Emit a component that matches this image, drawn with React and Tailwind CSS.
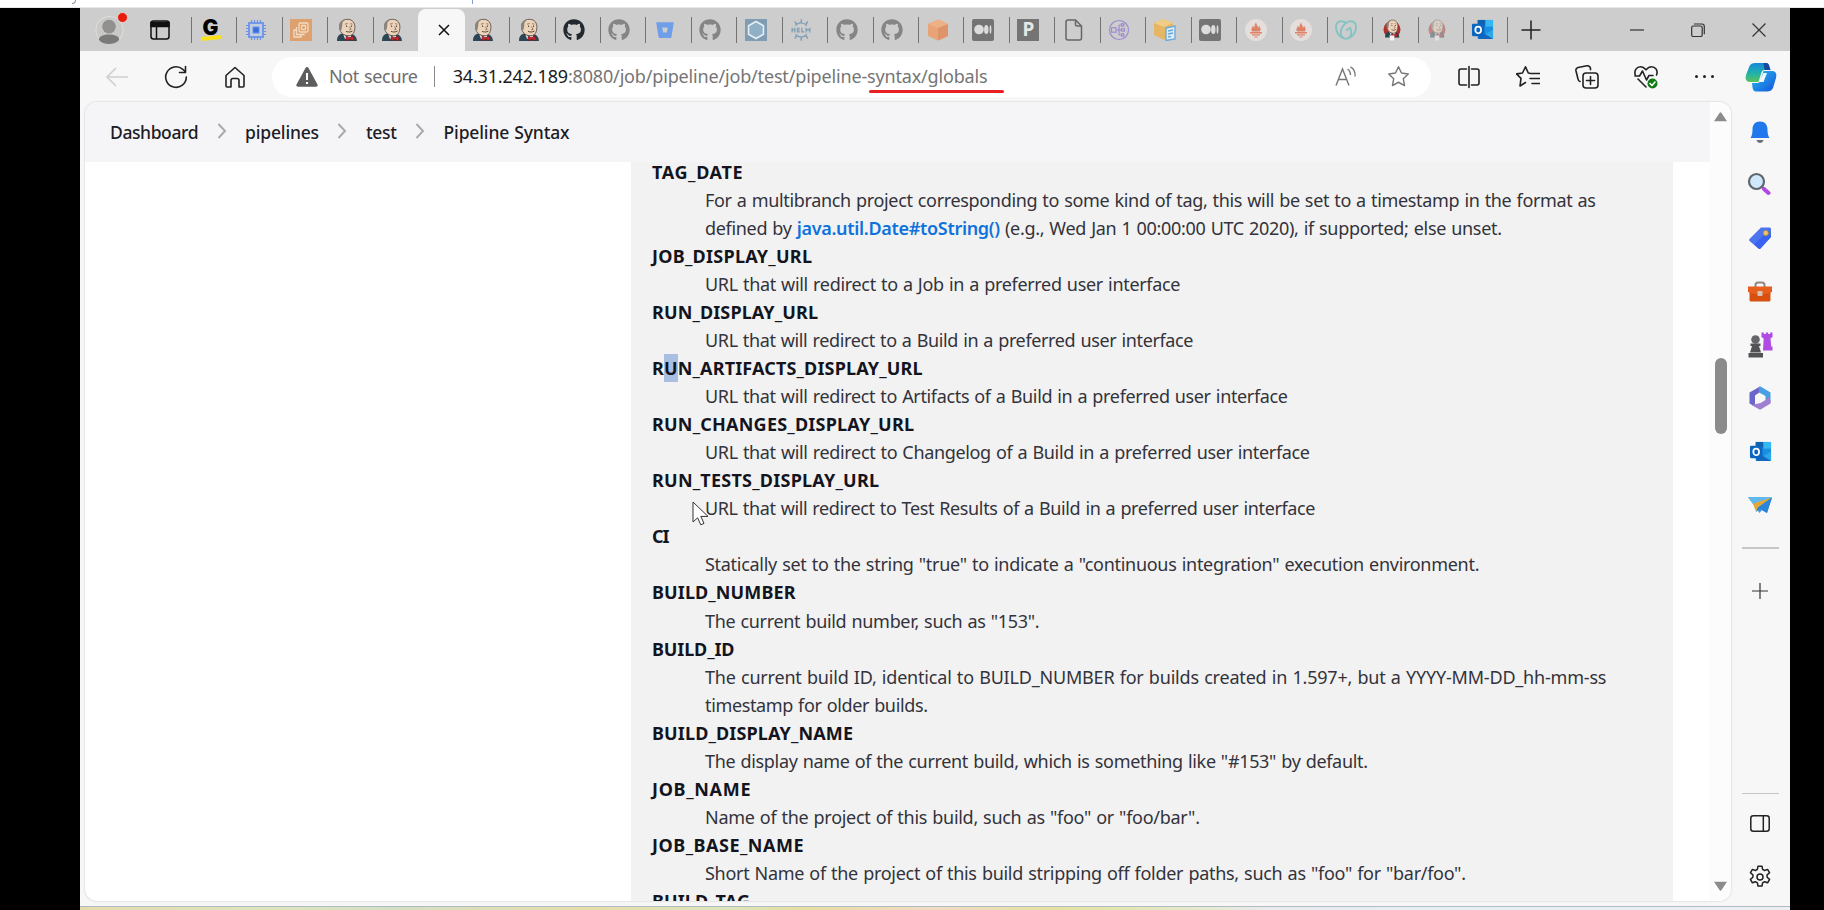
import { useLayoutEffect, useRef } from "react";
import { FaGithub, FaBitbucket } from "react-icons/fa";
import { SiHelm, SiPrometheus, SiGodaddy } from "react-icons/si";

/* Single line of text whose tracking is adjusted to fill a given width. */
function Fit({ w, className = "", children }) {
  const ref = useRef(null);
  useLayoutEffect(() => {
    const el = ref.current;
    el.style.letterSpacing = "0px";
    const natural = el.getBoundingClientRect().width;
    el.style.letterSpacing = (w - natural) / Math.max(1, el.textContent.length - 1) + "px";
  }, [w]);
  return (
    <span ref={ref} className={"inline-block whitespace-pre [word-spacing:0.8px] " + className}>
      {children}
    </span>
  );
}

function JenkinsFigure() {
  return (
    <g>
      <path d="M1 23c0-4.500 1.500-6.500 5-7.500l9 .5c4 .7 5.500 3 6 7z" fill="#2d4656" />
      <path d="M7 15.500l4 3.500 4-3v3l-6 2z" fill="#e8e4df" />
      <path d="M3.800 11C2.800 5 6 1.300 11.500 1.300c5 0 8 3.700 7.300 9.200-.4 4.500-2.300 7-5.800 7.300-5 .2-8.500-2.800-9.200-6.800z" fill="#ecd3b9" stroke="#4d403a" strokeWidth=".8" />
      <path d="M3.600 12C1.800 7 3.800 2.300 9 1.500 7 3.500 6 5 6.300 7.500l-.8 4.300z" fill="#8b857f" />
      <path d="M9 6.200l2.600-.7M14.200 5.700l2.300.5M13.400 8.500l1.700 2.800-1.900.6" fill="none" stroke="#7a6255" strokeWidth=".8" />
      <path d="M10 13.300c2 1 4.500 1 6.500-.3" fill="none" stroke="#5a463e" strokeWidth="1" />
      <circle cx="10.600" cy="8.200" r=".65" fill="#2b2220" />
      <circle cx="15.500" cy="8.200" r=".65" fill="#2b2220" />
      <path d="M10 18.500l3.500 1.300 4-1.800.5 4.800-4.300-1.500-3.500 1.500z" fill="#c9252b" stroke="#6f1518" strokeWidth=".5" />
    </g>
  );
}

function Jenkins() {
  return (
    <svg viewBox="0 0 22 24" className="h-6 w-[22px]">
      <JenkinsFigure />
    </svg>
  );
}

function JenkinsRound() {
  return (
    <svg viewBox="0 0 22 24" className="h-6 w-[22px]">
      <circle cx="11" cy="11.500" r="8.500" fill="#b5302c" />
      <g transform="translate(3.300 1) scale(.72 .8)"><JenkinsFigure /></g>
      <path d="M8.500 17.500h5l-.5 5h-4z" fill="#f5f5f5" />
    </svg>
  );
}

function Outlook() {
  return (
    <svg viewBox="0 0 24 24" className="size-[23px]">
      <rect x="7" y="2" width="16" height="20" rx="1" fill="#1a8fe0" />
      <rect x="7" y="2" width="8" height="6" fill="#0f62b0" />
      <rect x="15" y="2" width="8" height="7" fill="#35b8f1" />
      <path d="M7 22l16-10v9a1 1 0 01-1 1z" fill="#2aa8ea" />
      <path d="M7 12l16 10H8z" fill="#1266bd" />
      <rect x="1" y="6" width="13" height="13" rx="1.200" fill="#0b66c0" />
      <ellipse cx="7.500" cy="12.500" rx="3" ry="3.400" fill="none" stroke="#fff" strokeWidth="1.800" />
    </svg>
  );
}

function Medium() {
  return (
    <svg viewBox="0 0 22 22" className="size-[22px]">
      <rect width="22" height="22" rx="2" fill="#747474" />
      <circle cx="7" cy="10.500" r="4.800" fill="#dcdcdc" />
      <ellipse cx="14.300" cy="10.500" rx="2.200" ry="4.600" fill="#dcdcdc" />
      <ellipse cx="18.500" cy="10.500" rx=".9" ry="4.200" fill="#dcdcdc" />
    </svg>
  );
}

function Prom() {
  return (
    <span className="flex size-[22px] items-center justify-center rounded-full bg-[#e4dfdd]">
      <svg viewBox="0 0 16 16" className="size-4" fill="#dd8468">
        <path d="M4 9.500C2.500 7 4.500 6 4.800 3.500 5.500 4.500 6 5 6 6c1-2 .5-4 2-5.500C8.500 2.500 10 4 10 6c.5-.8 1-1.500 1-2.500 1 2 2.500 3.500 1 6zM2 10h12v1.500H2zM4 12.300h8v1.300H4zM6 14.400h4c-.5 1.600-3.500 1.600-4 0z" />
      </svg>
    </span>
  );
}

const Hub = () => <FaGithub className="size-[22px] text-[#858585]" />;

const tabs = [
  <span className="flex h-[22px] w-5 flex-col items-center">
    <span className="font-['Inter',sans-serif] text-[21px] leading-[17px] font-black text-black">G</span>
    <span className="h-1 w-5 -rotate-6 bg-[#fbe11c]" />
  </span>,
  <svg viewBox="0 0 22 22" className="size-[22px]" fill="none" stroke="#6a93e8">
    <path d="M6.500 1v20M9.500 1v20M12.500 1v20M15.500 1v20M1 6.500h20M1 9.500h20M1 12.500h20M1 15.500h20" strokeWidth="1.200" />
    <rect x="4" y="4" width="14" height="14" fill="#c3cde2" strokeWidth="1.800" />
    <rect x="8" y="8" width="6" height="6" fill="#3b6fdc" />
  </svg>,
  <svg viewBox="0 0 22 22" className="size-[22px]" fill="none" stroke="#f2dcc5" strokeWidth="1.300">
    <rect width="22" height="22" fill="#dea06c" stroke="none" />
    <rect x="9" y="4" width="9" height="9" rx="1.500" />
    <rect x="11.500" y="6.500" width="4" height="4" rx=".5" />
    <path d="M6.500 8v7.500h7.500V14.500M6.500 11H4v7h7v-2.500" />
  </svg>,
  <Jenkins />,
  <Jenkins />,
  "active",
  <Jenkins />,
  <Jenkins />,
  <FaGithub className="size-[22px] text-[#24292f]" />,
  <Hub />,
  <FaBitbucket className="size-[18px] text-[#6f9fe8]" />,
  <Hub />,
  <svg viewBox="0 0 22 22" className="size-[22px]">
    <rect width="22" height="22" fill="#7f9cb2" />
    <path d="M11 2.500l7.500 4.200v8.600L11 19.500l-7.500-4.200V6.700z" fill="#8fb0c6" stroke="#e6eef3" strokeWidth="1.600" />
  </svg>,
  <SiHelm className="size-[22px] text-[#7d9fb4]" />,
  <Hub />,
  <Hub />,
  <svg viewBox="0 0 22 22" className="size-[22px]">
    <path d="M11 .5l10 4.500v12L11 21.500 1 17V5z" fill="#e8a477" />
    <path d="M11 9l10-4v12l-10 4.500z" fill="#dd9468" />
    <path d="M1 5l10 4 10-4L11 .5z" fill="#eeb085" />
  </svg>,
  <Medium />,
  <span className="flex size-[22px] items-center justify-center bg-[#747474] font-['Noto_Sans',sans-serif] text-[19px] leading-none font-bold text-[#e6e6e6]">P</span>,
  <svg viewBox="0 0 18 22" className="h-[22px] w-[18px]" fill="none" stroke="#666" strokeWidth="1.500">
    <path d="M3 1h7.500L16.500 7v12a2 2 0 01-2 2H3a2 2 0 01-2-2V3a2 2 0 012-2zM10.500 1v4.500a1.500 1.500 0 001.500 1.500h4.500" />
  </svg>,
  <svg viewBox="0 0 22 22" className="size-[22px]" fill="none" stroke="#9d8cce" strokeWidth="1.200">
    <circle cx="11" cy="11" r="9.500" />
    <rect x="3.500" y="8.700" width="4.500" height="4.500" />
    <path d="M8 11h5.500M11 6v10M11 6h2.500M11 16h2.500" />
    <rect x="13.500" y="4.800" width="2.300" height="2.300" /><rect x="13.500" y="9.800" width="3" height="2.300" /><rect x="13.500" y="14.800" width="2.300" height="2.300" />
  </svg>,
  <svg viewBox="0 0 22 22" className="size-[22px]">
    <path d="M0 4l9-4 10 4v12l-9 5-10-5z" fill="#e5b765" />
    <path d="M0 4l9-4 10 4-9 4z" fill="#f0cd86" />
    <path d="M12 9l9-2v13l-9 1.500z" fill="#dcecf5" stroke="#6ba7d6" strokeWidth="1.300" />
    <path d="M14 12l5-1M14 15l5-1M14 18l3-.5" stroke="#6ba7d6" strokeWidth="1.300" />
  </svg>,
  <Medium />,
  <Prom />,
  <Prom />,
  <SiGodaddy className="size-[22px] text-[#87c3c5]" />,
  <JenkinsRound />,
  <span className="opacity-45"><JenkinsRound /></span>,
  <Outlook />,
];

const vars = [
  ["TAG_DATE", 90.5, [
    ["For a multibranch project corresponding to some kind of tag, this will be set to a timestamp in the format as", 891],
    ["java", 797],
  ]],
  ["JOB_DISPLAY_URL", 160, [["URL that will redirect to a Job in a preferred user interface", 475.5]]],
  ["RUN_DISPLAY_URL", 166, [["URL that will redirect to a Build in a preferred user interface", 488.5]]],
  ["RUN_ARTIFACTS_DISPLAY_URL", 270.5, [["URL that will redirect to Artifacts of a Build in a preferred user interface", 583]]],
  ["RUN_CHANGES_DISPLAY_URL", 262, [["URL that will redirect to Changelog of a Build in a preferred user interface", 605]]],
  ["RUN_TESTS_DISPLAY_URL", 227, [["URL that will redirect to Test Results of a Build in a preferred user interface", 610.5]]],
  ["CI", 17.5, [['Statically set to the string "true" to indicate a "continuous integration" execution environment.', 774.5]]],
  ["BUILD_NUMBER", 143.5, [['The current build number, such as "153".', 334.5]]],
  ["BUILD_ID", 82.5, [
    ["The current build ID, identical to BUILD_NUMBER for builds created in 1.597+, but a YYYY-MM-DD_hh-mm-ss", 901.5],
    ["timestamp for older builds.", 223],
  ]],
  ["BUILD_DISPLAY_NAME", 201, [['The display name of the current build, which is something like "#153" by default.', 663]]],
  ["JOB_NAME", 98.5, [['Name of the project of this build, such as "foo" or "foo/bar".', 495]]],
  ["JOB_BASE_NAME", 151.5, [['Short Name of the project of this build stripping off folder paths, such as "foo" for "bar/foo".', 761]]],
  ["BUILD_TAG", 98, []],
];

function Line({ text, w }) {
  if (text === "java")
    return (
      <Fit w={w}>
        defined by <a className="font-semibold text-[#0f72dc]">java.util.Date#toString()</a> (e.g., Wed Jan 1 00:00:00 UTC 2020), if supported; else unset.
      </Fit>
    );
  return <Fit w={w}>{text}</Fit>;
}

function Crumb({ w, children }) {
  return <Fit w={w} className="text-[17.500px] font-medium text-[#1c1c26]">{children}</Fit>;
}
const Sep = () => (
  <svg viewBox="0 0 10 16" className="mx-[18.500px] h-4 w-[10px] -translate-y-px" fill="none" stroke="#a9a9b0" strokeWidth="2">
    <path d="M1.500 1l6.500 7-6.500 7" />
  </svg>
);

const Tool = ({ className, children }) => (
  <span className={"flex shrink-0 items-center justify-center " + className}>
    <svg viewBox="0 0 24 24" className="size-6" fill="none" stroke="#222" strokeWidth="1.600" strokeLinecap="round" strokeLinejoin="round">{children}</svg>
  </span>
);

const sideIcons = [
  <svg viewBox="0 0 24 24" className="size-6">
    <path d="M12 1.500c-5 0-7.500 3.500-7.500 8 0 4-.5 6-2 8.500h19c-1.500-2.500-2-4.500-2-8.500 0-4.500-2.500-8-7.500-8z" fill="#2078ec" />
    <path d="M8.500 20h7c-.5 2-2 3-3.500 3s-3-1-3.500-3z" fill="#6b6e76" />
  </svg>,
  <svg viewBox="0 0 24 24" className="size-6 -translate-x-px -translate-y-px">
    <path d="M14.500 14.500l3 2.500" stroke="#6d6f75" strokeWidth="2.500" />
    <path d="M17 17l4.500 4" stroke="#b24ae0" strokeWidth="4" strokeLinecap="round" />
    <circle cx="9.500" cy="9.500" r="7.500" fill="#cfe8fb" stroke="#5e666d" strokeWidth="2.200" />
  </svg>,
  <svg viewBox="0 0 24 24" className="size-6">
    <path d="M13 1.500h8.500a1.500 1.500 0 011.500 1.500v8L12.500 22.500a1.500 1.500 0 01-2 0L1.500 15a1.500 1.500 0 010-2z" fill="#4c74ee" />
    <path d="M23 11L12.500 22.500a1.500 1.500 0 01-2 0L6 18.500 21 4z" fill="#3a62f0" />
    <circle cx="17.800" cy="7" r="2.600" fill="#e9c469" stroke="#b78c3a" strokeWidth=".8" />
  </svg>,
  <svg viewBox="0 0 26 24" className="h-6 w-[26px]">
    <path d="M8.500 7V5a2.500 2.500 0 012.500-2.500h4A2.500 2.500 0 0117.500 5v2" fill="none" stroke="#8f8782" strokeWidth="2" />
    <rect x="2.500" y="8" width="21" height="13.500" rx="1.500" fill="#d8500f" />
    <path d="M1 6.500h24v5.500c-8 3-16 3-24 0z" fill="#e65f1c" />
    <rect x="10.500" y="11" width="5" height="5" rx="1" fill="#d9c3b5" />
  </svg>,
  <svg viewBox="0 0 26 26" className="size-[26px]">
    <circle cx="8.500" cy="7.500" r="4.300" fill="#66666a" />
    <path d="M3.500 11.500h10v2.500h-1.500l2 6.500h-11l2-6.500H3.500zM1.500 21h14.500v4.500H1.500z" fill="#535357" />
    <path d="M14.500 .5h2.300v1.500h2V.5h2.400v1.500h2V.5h2.300v4.500l-2 1.500.7 8h1.300v4H16l.7-12-2.200-1.500z" fill="#b04be4" />
  </svg>,
  <svg viewBox="0 0 24 24" className="size-6">
    <path d="M12 .5L1.500 6.500v11l5.500 3V9.500l7-5z" fill="#6a66c9" />
    <path d="M11 .800a2 2 0 012 0L22.500 6.500v10.500l-5-3V10L11 6.500z" fill="#4a9fe3" />
    <path d="M22.500 14.500v3l-9.500 5.700a2 2 0 01-2 0L3.500 19l9-2 5-3 3-3z" fill="#a07fd0" />
    <path d="M12 7.500l4 2.300v4.400L12 16.500l-4-2.300V9.800z" fill="#f7f7f7" />
  </svg>,
  <Outlook />,
  <svg viewBox="0 0 24 24" className="size-6">
    <path d="M0 4l24 .5L19 20l-5-3-2.500 3-5-7z" fill="#379be4" />
    <path d="M0 4l24 .5L6.500 13z" fill="#60b8ee" />
    <path d="M24 4.500L5 10.500 8 19l2-4.500z" fill="#e2a73a" />
    <path d="M24 4.500L10 14.500 8 19l4-3 7 4z" fill="#2a84d9" />
  </svg>,
];

export default function App() {
  return (
    <div className="flex h-[910px] w-[1824px] flex-col overflow-hidden bg-black font-['Noto_Sans',sans-serif]">
      <div className="flex h-2 shrink-0 items-start overflow-hidden border-b border-[#e8e8e8] bg-white pl-[72px]">
        <span className="h-1 w-1 rounded-br-full border-r border-b border-[#8794a8]" />
        <span className="ml-[396px] h-1 w-px bg-[#7f9fce]" />
      </div>
      <div className="ml-20 flex h-[902px] w-[1710px] flex-col bg-[#f7f7f7]">
        {/* Tab strip */}
        <div className="flex h-[43px] shrink-0 items-center bg-[#cdcdcd]">
          <span className="relative ml-[15px] flex size-[29px] shrink-0 items-center justify-center overflow-visible">
            <svg viewBox="0 0 30 30" className="size-[30px]">
              <circle cx="15" cy="15" r="14" fill="#c9c9c7" stroke="#dcdcdc" strokeWidth="1.200" />
              <circle cx="14.500" cy="11.500" r="7" fill="#91908e" />
              <path d="M4 25c0-7 21-7 21 0-4 6-17 6-21 0z" fill="#7a7a78" />
            </svg>
            <span className="absolute top-[-3px] right-[-4px] size-[11px] rounded-full border border-[#e2d4d2] bg-[#e81c0c]" />
          </span>
          <svg viewBox="0 0 20 20" className="ml-[26px] size-5 shrink-0" fill="none" stroke="#111" strokeWidth="1.500">
            <rect x="1" y="1" width="18" height="18" rx="2.500" />
            <path d="M1 2.500h18v4H1z" fill="#111" />
            <path d="M6.500 6v13" />
          </svg>
          <div className="ml-[21px] flex h-full items-center">
            {tabs.map((t, i) =>
              t === "active" ? (
                <span key={i} className="flex h-full w-[45.450px] items-end">
                  <span className="flex h-[42px] w-[47px] shrink-0 items-center justify-center rounded-t-lg bg-[#f7f7f7]">
                    <svg viewBox="0 0 12 12" className="ml-1 size-3" stroke="#111" strokeWidth="1.500"><path d="M1 1l10 10M11 1L1 11" /></svg>
                  </span>
                </span>
              ) : (
                <span key={i} className="flex h-full w-[45.450px] shrink-0 items-center">
                  <span className={"h-[26px] w-px shrink-0 " + (i === 6 ? "bg-transparent" : "bg-[#737373]")} />
                  <span className="flex w-[37px] items-center justify-center">{t}</span>
                </span>
              )
            )}
            <span className="-ml-[2px] h-[26px] w-px bg-[#737373]" />
          </div>
          <svg viewBox="0 0 20 20" className="ml-[13px] size-5 shrink-0" stroke="#222" strokeWidth="1.500"><path d="M10 .5v19M.5 10h19" /></svg>
          <svg viewBox="0 0 14 14" className="ml-[89px] size-[14px] shrink-0" stroke="#333" strokeWidth="1.200"><path d="M0 7h14" /></svg>
          <svg viewBox="0 0 14 14" className="ml-[47px] size-[14px] shrink-0" fill="none" stroke="#333" strokeWidth="1.200">
            <rect x=".7" y="3" width="10.500" height="10.500" rx="1.500" />
            <path d="M3 1h8a2.300 2.300 0 012.300 2.300v8" />
          </svg>
          <svg viewBox="0 0 14 14" className="ml-[47px] size-[14px] shrink-0" stroke="#333" strokeWidth="1.200"><path d="M.5.500l13 13M13.500.5l-13 13" /></svg>
        </div>

        {/* Toolbar */}
        <div className="flex h-[51px] shrink-0 items-center">
          <span className="ml-[25px] flex w-6 items-center justify-center">
            <svg viewBox="0 0 24 24" className="size-6" fill="none" stroke="#cfcfcf" strokeWidth="1.600"><path d="M23 12H2M11 3l-9 9 9 9" /></svg>
          </span>
          <Tool className="ml-[35px] w-6"><path d="M22.300 12a10.300 10.300 0 11-3.500-7.700L21.500 7M21.500 1.500V7.500h-6" /></Tool>
          <Tool className="ml-[35px] w-6"><path d="M3 10.500L12 2.500l9 8V21a1 1 0 01-1 1h-4v-6.500a2 2 0 00-2-2h-4a2 2 0 00-2 2V22H4a1 1 0 01-1-1z" /></Tool>
          <div className="relative ml-[25px] flex h-10 w-[1159px] shrink-0 items-center rounded-full bg-white">
            <svg viewBox="0 0 22 20" className="ml-6 h-5 w-[22px] shrink-0">
              <path d="M9.500 1a1.700 1.700 0 013 0l9 16.500a1.600 1.600 0 01-1.500 2.300H2a1.600 1.600 0 01-1.500-2.300z" fill="#5d5d5d" />
              <path d="M11 6v7M11 15v2" stroke="#fff" strokeWidth="2" />
            </svg>
            <Fit w={89} className="ml-[11px] text-[18px] text-[#6e6e6e]">Not secure</Fit>
            <span className="ml-4 h-[21px] w-px shrink-0 bg-[#8a8a8a]" />
            <Fit w={535} className="ml-[18px] text-[18px] text-[#757575]"><span className="text-[#1b1b1b]">34.31.242.189</span>:8080/job/pipeline/job/test/pipeline-syntax/globals</Fit>
            <span className="absolute top-[33px] left-[597px] h-[3px] w-[135px] rounded-full bg-[#ea1f24]" />
            <span className="ml-auto flex items-center pr-[21px]">
              <svg viewBox="0 0 22 22" className="size-[22px]" fill="none" stroke="#777" strokeWidth="1.400">
                <path d="M1 19.500L7.500 3 14 19.500M3.500 13.500h8M12.500 3c2.500 1.500 3 3.500 3 6M15.500.800c3.500 2 5 5.500 4.500 9.700" />
              </svg>
              <svg viewBox="0 0 24 24" className="ml-[30px] size-[23px]" fill="none" stroke="#777" strokeWidth="1.500" strokeLinejoin="round">
                <path d="M12 1.800l3.100 6.600 7.100.9-5.200 5 1.300 7.200L12 18l-6.300 3.500L7 14.300l-5.200-5 7.100-.9z" />
              </svg>
            </span>
          </div>
          <Tool className="ml-[26px] w-6"><path d="M9.500 4H4a2 2 0 00-2 2v12a2 2 0 002 2h5.500M14.500 4H20a2 2 0 012 2v12a2 2 0 01-2 2h-5.500M12 1.500v21" /></Tool>
          <Tool className="ml-[35px] w-6"><path d="M15 8.500L12.300 8 9.500 1.800 6.500 8l-6 .9 4.500 4.500L4 21l5.500-3.500M16 8.500h7.500M14 13.500h9.500M16 18.500h7.500" /></Tool>
          <Tool className="ml-[35px] w-6"><rect x="8" y="8" width="15" height="15" rx="3" /><path d="M15.500 11.500v8M11.500 15.500h8M5 16.500a3 3 0 01-2-2.500L1 6a3 3 0 012-3.500l9-1.700a3 3 0 013.500 2.500v1.500" /></Tool>
          <Tool className="ml-[35px] w-6"><path d="M1.500 11C-.5 5 3 1.800 6.500 1.800c2.500 0 4 1.200 5.500 3 1.500-1.800 3-3 5.500-3 3.500 0 7 3.200 5 8.200M1 11h4.500l3-5 4 9 2.500-4.500h4M4 14l8 8" /><circle cx="18.500" cy="18.500" r="5" fill="#117a17" stroke="none" /><path d="M16 18.500l2 2 3-3.500" stroke="#fff" /></Tool>
          <span className="ml-[37px] flex items-center gap-[5px]">
            <i className="size-[3px] rounded-full bg-[#222]" /><i className="size-[3px] rounded-full bg-[#222]" /><i className="size-[3px] rounded-full bg-[#222]" />
          </span>
          <svg viewBox="0 0 32 30" className="ml-[31px] h-[30px] w-8 shrink-0">
            <defs>
              <linearGradient id="ca" x1="0" y1="0" x2="0" y2="1"><stop offset="0" stopColor="#1887dc" /><stop offset=".55" stopColor="#20b4a8" /><stop offset="1" stopColor="#5cc25c" /></linearGradient>
              <linearGradient id="cb" x1="0" y1="0" x2="1" y2="1"><stop offset="0" stopColor="#25bdf0" /><stop offset="1" stopColor="#1653da" /></linearGradient>
            </defs>
            <path d="M10 1h11c2 0 3 1.500 3.500 4l1 3h-6c-2 0-3 2-3.500 4l-2.500 8H5c-4 0-5-3-4-7L4.500 4C5.500 2 7.500 1 10 1z" fill="url(#ca)" />
            <path d="M18.500 1H21c2 0 3 1.500 3.500 4l1 3h-6z" fill="#17479e" />
            <path d="M22 29.500H11c-2 0-3-1.500-3.500-4L7 21h5.500c2 0 3-2 3.500-4l2.500-8H27c4 0 5 3 4 7l-3 10c-1 2.500-3.500 3.500-6 3.500z" fill="url(#cb)" />
            <path d="M18.500 11h3.500l-3.500 9h-4.300z" fill="#f4f8fb" />
          </svg>
        </div>

        <div className="flex h-[799px] shrink-0">
          {/* Page */}
          <div className="ml-[5px] flex w-[1646px] shrink-0 overflow-hidden rounded-xl bg-white shadow-[0_0_2px_#bbbbbb]">
            <div className="flex w-[1625px] shrink-0 flex-col">
              <div className="flex h-[60px] shrink-0 items-center bg-[#f5f5f8] pl-[25px]">
                <Crumb w={88.5}>Dashboard</Crumb><Sep />
                <Crumb w={74}>pipelines</Crumb><Sep />
                <Crumb w={31}>test</Crumb><Sep />
                <Crumb w={126}>Pipeline Syntax</Crumb>
              </div>
              <div className="ml-[546px] min-h-0 w-[1042px] flex-1 overflow-hidden bg-[#f2f2f2] pl-[21px]">
                <dl className="-mt-[4px] text-[18px] leading-7 text-[#33333b]">
                  {vars.map(([name, w, lines]) => (
                    <div key={name}>
                      <dt className="h-[28.040px] font-bold text-[#14141e]">
                        {name.startsWith("RUN_ART") ? (
                          <Fit w={w}>R<span className="inline-block h-7 bg-[#a9bfe2]">U</span>N_ARTIFACTS_DISPLAY_URL</Fit>
                        ) : (
                          <Fit w={w}>{name}</Fit>
                        )}
                      </dt>
                      {lines.map(([text, lw]) => (
                        <dd key={text} className="relative ml-[53px] h-[28.040px]">
                          <Line text={text} w={lw} />
                          {text.includes("Test Results") && (
                            <svg viewBox="0 0 17 25" className="absolute top-[7px] -left-[13px] h-[25px] w-[17px]">
                              <path d="M1 1v20l4.600-4.200 3.200 7 3.200-1.400-3.200-7H16z" fill="#fff" stroke="#333" strokeWidth="1" />
                            </svg>
                          )}
                        </dd>
                      ))}
                    </div>
                  ))}
                </dl>
              </div>
            </div>
            <div className="flex w-[21px] flex-col items-center bg-[#fcfcfc] pt-[10px] pb-[10px]">
              <svg viewBox="0 0 13 10" className="h-[10px] w-[13px]"><path d="M5.500 1a1.200 1.200 0 012 0L13 9.200H0z" fill="#8b8b8b" /></svg>
              <span className="mt-[236px] h-[76px] w-3 rounded-full bg-[#8b8b8b]" />
              <svg viewBox="0 0 13 10" className="mt-auto h-[10px] w-[13px]"><path d="M5.500 9a1.200 1.200 0 002 0L13 .8H0z" fill="#8b8b8b" /></svg>
            </div>
          </div>

          {/* Sidebar */}
          <div className="flex w-[58px] shrink-0 flex-col items-center pt-[3px]">
            {sideIcons.map((s, i) => (
              <span key={i} className="flex h-[53.300px] shrink-0 items-center">{s}</span>
            ))}
            <span className="mt-[16px] h-[2px] w-[37px] shrink-0 bg-[#c6c6c6]" />
            <svg viewBox="0 0 16 16" className="mt-[34px] size-4 shrink-0" stroke="#333" strokeWidth="1.200"><path d="M8 0v16M0 8h16" /></svg>
            <span className="mt-auto h-px w-[37px] shrink-0 bg-[#c6c6c6]" />
            <svg viewBox="0 0 20 17" className="mt-[21px] h-[17px] w-5 shrink-0" fill="none" stroke="#222" strokeWidth="1.500"><rect x=".8" y=".8" width="18.400" height="15.400" rx="2.500" /><path d="M13.300 1v15" /></svg>
            <svg viewBox="0 0 24 24" className="mt-[33px] mb-[12px] size-6 shrink-0" fill="none" stroke="#222" strokeWidth="1.500" strokeLinejoin="round">
              <circle cx="12" cy="12" r="3" />
              <path d="M10 1.200h4l.6 3.200 2 1.100 3-1.100 2 3.400-2.500 2.100v2.300l2.500 2.200-2 3.400-3-1.100-2 1.200-.6 3.100h-4l-.6-3.100-2-1.200-3 1.100-2-3.400 2.500-2.200V9.900L2.400 7.800l2-3.400 3 1.100 2-1.100z" />
            </svg>
          </div>
        </div>
        <div className="mt-[5px] h-px shrink-0 bg-[#b4bac0]" />
        <div className="h-[3px] shrink-0 bg-[linear-gradient(90deg,#e4dcae_0%,#dbe6be_12%,#d3e0c4_18%,#e6deaa_30%,#dbe6be_38%,#e6dea0_42%,#f0dcc4_50%,#e4e2a0_57%,#e2e8b8_62%,#e8ecf0_70%,#e4f0f6_80%,#ebeff4_100%)]" />
      </div>
    </div>
  );
}
